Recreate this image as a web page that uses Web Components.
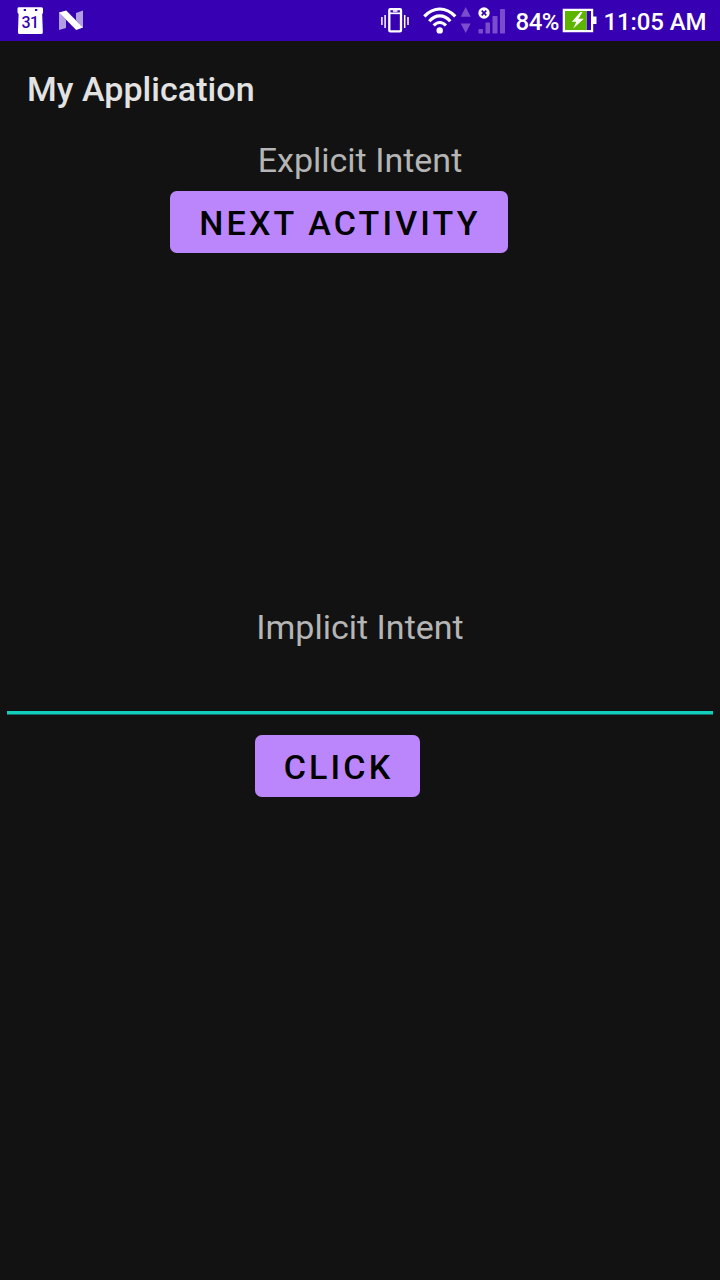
<!DOCTYPE html>
<html lang="en">
<head>
<meta charset="utf-8">
<title>My Application</title>
<style>
html,body{margin:0;background:#121212}
body{font-family:Roboto,"Noto Sans",sans-serif;width:720px;height:1280px;overflow:hidden}
</style>
</head>
<body>
<app-screen></app-screen>
<script>
const define=(name,markup)=>customElements.define(name,class extends HTMLElement{
  constructor(){super();this.attachShadow({mode:'open'}).innerHTML=markup;}
});

define('status-notifications',`<style>:host{display:block;height:41px}svg{display:block}</style>
<svg width="100" height="41" viewBox="0 0 100 41">
  <path fill="#fff" d="M19 7.300H41.500q1.500 0 1.500 1.500v4l-.8 1.500.6 17v1.200q0 1.500-1.500 1.500H19.500q-1.500 0-1.500-1.500V31l.6-17-1.100-1.500v-4Q17.500 7.300 19 7.300z"/>
  <path fill="#3700b3" d="M23.700 9h2.300v2h-2.300zM35 9h2.300v2H35z"/>
  <text x="30" y="28.200" text-anchor="middle" font-family="Roboto,sans-serif" font-size="16" letter-spacing="-.5" font-weight="500" fill="#3700b3">31</text>
  <path fill="#fff" opacity=".62" d="M59 12l7 8v8l-7 2zM76 13l7-2.500V28l-7-8z"/>
  <path fill="#fff" d="M59 12.500l7.200-2L83 27.500l-6.800 2.500z"/>
</svg>`);

define('status-signals',`<style>:host{display:block;height:41px}svg{display:block}</style>
<svg width="130" height="41" viewBox="380 0 130 41" fill="none" stroke="#fff">
  <path stroke-width="1.500" d="M381.900 17v8M385.100 15v13M404.700 15v13M408 17v8"/>
  <rect x="389.300" y="9.200" width="11.700" height="22.200" rx="1" stroke-width="2.300"/>
  <path stroke-width="1.700" d="M389 13.300h12"/><path stroke-width="1.600" d="M393 11h4.500"/>
  <g stroke-width="3.200"><path d="M424.300 16.300Q431.500 9 439.800 9T455.300 16.300"/><path d="M429.300 21.200Q434 15.800 439.800 15.800T450.300 21.200"/><path d="M433.700 25.500Q436.500 22.500 439.800 22.500T445.900 25.500"/></g>
  <circle cx="439.700" cy="30.400" r="3.200" fill="#fff" stroke="none"/>
  <g fill="#7a4dcd" stroke="none"><path d="M465.700 7l5 9.700h-10zM460.700 23.500h10l-5 9.500z"/><rect x="478.500" y="29" width="4.500" height="4.500" rx=".7"/><rect x="485.500" y="22.500" width="4.500" height="11" rx=".7"/><rect x="492.500" y="16" width="5" height="17.500" rx=".7"/><rect x="500" y="9" width="5" height="24.500" rx=".7"/></g>
  <circle cx="484" cy="13" r="5.700" fill="#fff" stroke="none"/><path d="M481.700 10.700l4.600 4.600m0-4.600l-4.600 4.600" stroke="#3700b3" stroke-width="1.700"/>
</svg>`);

define('battery-icon',`<style>:host{display:block}svg{display:block}</style>
<svg width="36" height="41" viewBox="562 0 36 41">
  <path fill="#fff" d="M562.700 8.700h30.500v7.800h3.300v7.500h-3.300v8.300h-30.500z"/><path fill="#3700b3" d="M586.500 11h4.500v19h-4.500z"/><path fill="#5eb500" d="M565 11h21.500v19H565z"/>
  <path fill="#fff" d="M580.500 12l-8.700 9.700h4.500l-3 6.800 10.500-9.700h-5.300l4-6.800z"/>
</svg>`);

define('status-bar',`<style>
:host{display:flex;height:41px;background:#3700b3;color:#fff;font-size:24px;font-weight:500;line-height:44px}
status-signals{margin-left:280px}
.pct{width:46.500px;margin-left:5.500px;white-space:nowrap;letter-spacing:-.5px}
battery-icon{margin-left:-.5px}
.time{margin-left:6px;white-space:nowrap;letter-spacing:-.1px}
</style>
<status-notifications></status-notifications><status-signals></status-signals>
<span class="pct">84%</span><battery-icon></battery-icon><span class="time">11:05 AM</span>`);

define('text-label',`<style>:host{display:block;height:46px;line-height:46px;text-align:center;font-size:34px;color:#b5b5b5}</style><slot></slot>`);

define('action-button',`<style>
:host{display:block}
button{display:block;box-sizing:border-box;width:100%;height:61.500px;margin:0;padding:2px 0 0 2px;border:0;border-radius:6.800px;background:#bb86fc;color:#000;font:500 34px/59px Roboto,"Noto Sans",sans-serif;letter-spacing:3.150px;text-transform:uppercase;white-space:nowrap}
</style><button><slot></slot></button>`);

define('text-field',`<style>:host{display:block;padding:0 6.800px}svg{display:block;width:100%;height:65px}</style><svg><rect y="61" width="100%" height="3.500" fill="#11cfbc"/></svg>`);

define('app-screen',`<style>
:host{display:flex;flex-direction:column;width:720px;height:1280px;background:#121212}
h1{margin:0;padding:0 27px;height:96px;font-size:34px;line-height:96px;font-weight:500;letter-spacing:.05px;color:#e2e2e2}
.first{width:338px;margin:8.300px 0 0 170px}
.second{margin-top:351.200px}
.click{width:165px;margin:20.300px 0 0 255px}
</style>
<status-bar></status-bar>
<h1>My Application</h1>
<text-label>Explicit Intent</text-label>
<action-button class="first">Next Activity</action-button>
<text-label class="second">Implicit Intent</text-label>
<text-field></text-field>
<action-button class="click">Click</action-button>`);
</script>
</body>
</html>
